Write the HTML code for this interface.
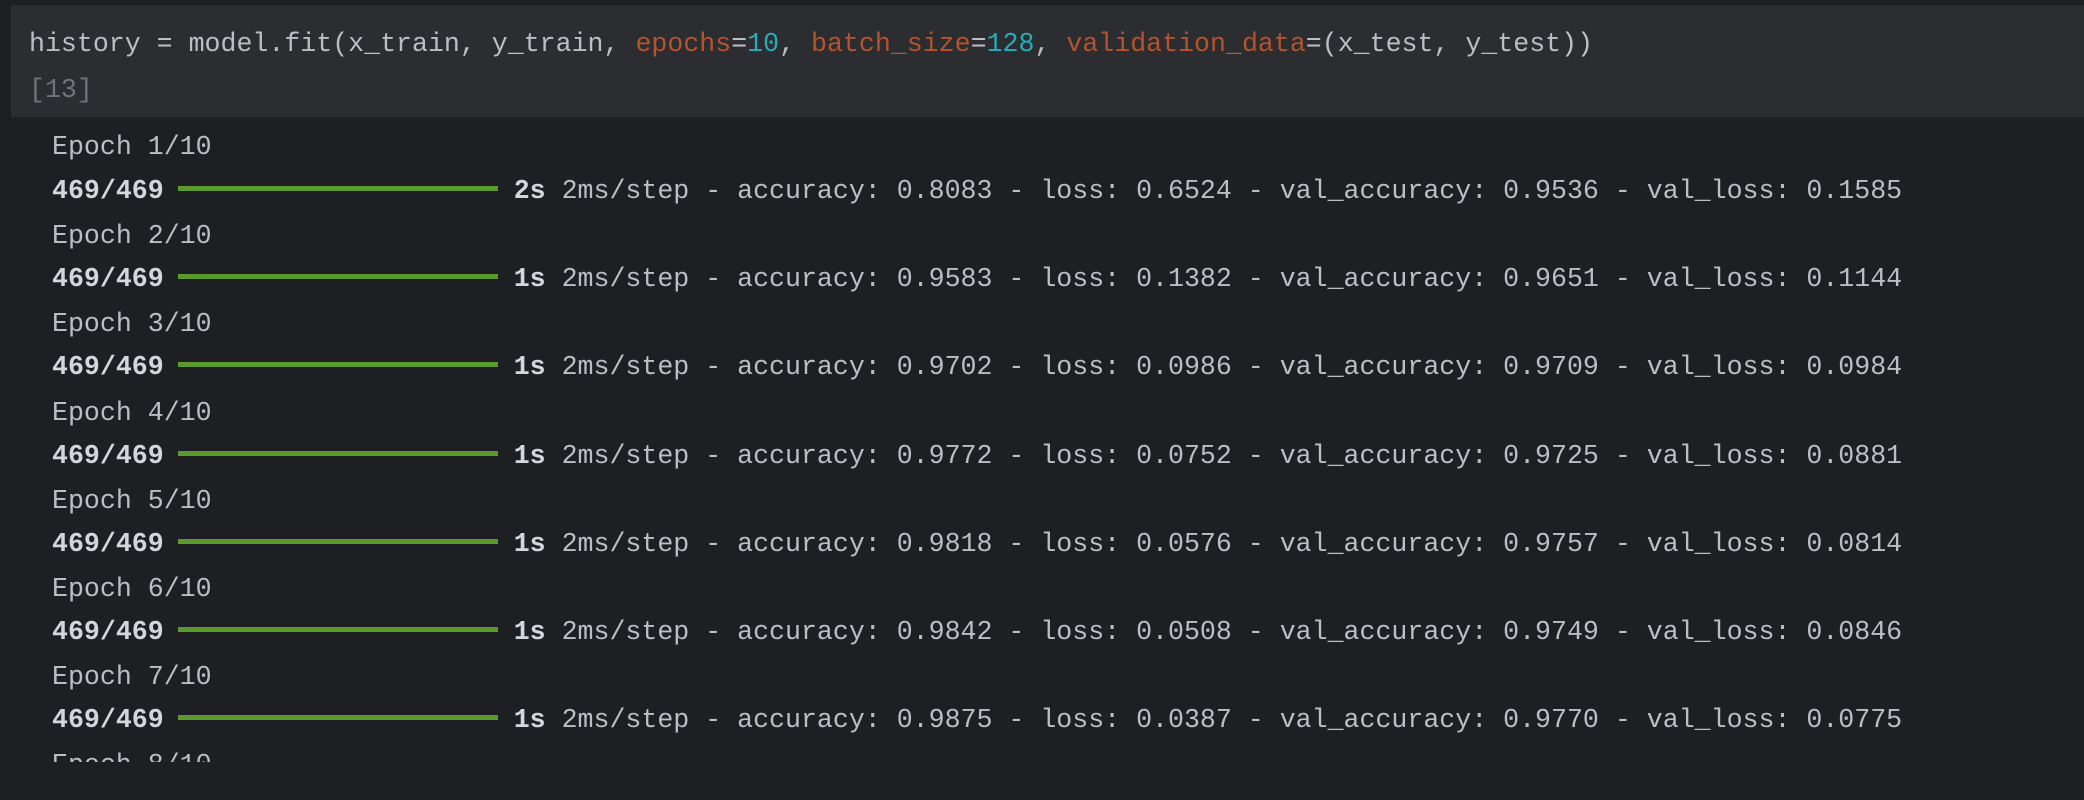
<!DOCTYPE html>
<html><head><style>
html,body{margin:0;padding:0;background:#1e1f22;width:2084px;height:800px;overflow:hidden}
body{font-family:"Liberation Mono",monospace;font-size:26.6px;color:#bcbec4;position:relative}
.cell{position:absolute;left:11px;top:5px;width:2073px;height:112px;background:#2b2d30}
.l{position:absolute;white-space:pre;line-height:44px;height:44px}
.o{color:#b4532c}.n{color:#2aacb8}.g{color:#6f737a}
b{font-weight:bold;color:#d4d6dc}
.bar{display:inline-block;width:320px;height:5px;background:#5a9a2a;vertical-align:middle;margin-right:16px;margin-left:-2px;position:relative;top:-2px}
.clip{position:absolute;left:0;top:0;width:2084px;height:762px;overflow:hidden}
</style></head><body>
<div class="cell"></div>
<div class="l" style="left:29px;top:22px">history = model.fit(x_train, y_train, <span class="o">epochs</span>=<span class="n">10</span>, <span class="o">batch_size</span>=<span class="n">128</span>, <span class="o">validation_data</span>=(x_test, y_test))</div>
<div class="l g" style="left:29px;top:68px">[13]</div>
<div class="clip">
<div class="l" style="left:52px;top:125px">Epoch 1/10</div>
<div class="l" style="left:52px;top:169px"><b>469/469</b> <span class="bar"></span><b>2s</b> 2ms/step - accuracy: 0.8083 - loss: 0.6524 - val_accuracy: 0.9536 - val_loss: 0.1585</div>
<div class="l" style="left:52px;top:214px">Epoch 2/10</div>
<div class="l" style="left:52px;top:257px"><b>469/469</b> <span class="bar"></span><b>1s</b> 2ms/step - accuracy: 0.9583 - loss: 0.1382 - val_accuracy: 0.9651 - val_loss: 0.1144</div>
<div class="l" style="left:52px;top:302px">Epoch 3/10</div>
<div class="l" style="left:52px;top:345px"><b>469/469</b> <span class="bar"></span><b>1s</b> 2ms/step - accuracy: 0.9702 - loss: 0.0986 - val_accuracy: 0.9709 - val_loss: 0.0984</div>
<div class="l" style="left:52px;top:391px">Epoch 4/10</div>
<div class="l" style="left:52px;top:434px"><b>469/469</b> <span class="bar"></span><b>1s</b> 2ms/step - accuracy: 0.9772 - loss: 0.0752 - val_accuracy: 0.9725 - val_loss: 0.0881</div>
<div class="l" style="left:52px;top:479px">Epoch 5/10</div>
<div class="l" style="left:52px;top:522px"><b>469/469</b> <span class="bar"></span><b>1s</b> 2ms/step - accuracy: 0.9818 - loss: 0.0576 - val_accuracy: 0.9757 - val_loss: 0.0814</div>
<div class="l" style="left:52px;top:567px">Epoch 6/10</div>
<div class="l" style="left:52px;top:610px"><b>469/469</b> <span class="bar"></span><b>1s</b> 2ms/step - accuracy: 0.9842 - loss: 0.0508 - val_accuracy: 0.9749 - val_loss: 0.0846</div>
<div class="l" style="left:52px;top:655px">Epoch 7/10</div>
<div class="l" style="left:52px;top:698px"><b>469/469</b> <span class="bar"></span><b>1s</b> 2ms/step - accuracy: 0.9875 - loss: 0.0387 - val_accuracy: 0.9770 - val_loss: 0.0775</div>
<div class="l" style="left:52px;top:743px">Epoch 8/10</div>
</div>
</body></html>
